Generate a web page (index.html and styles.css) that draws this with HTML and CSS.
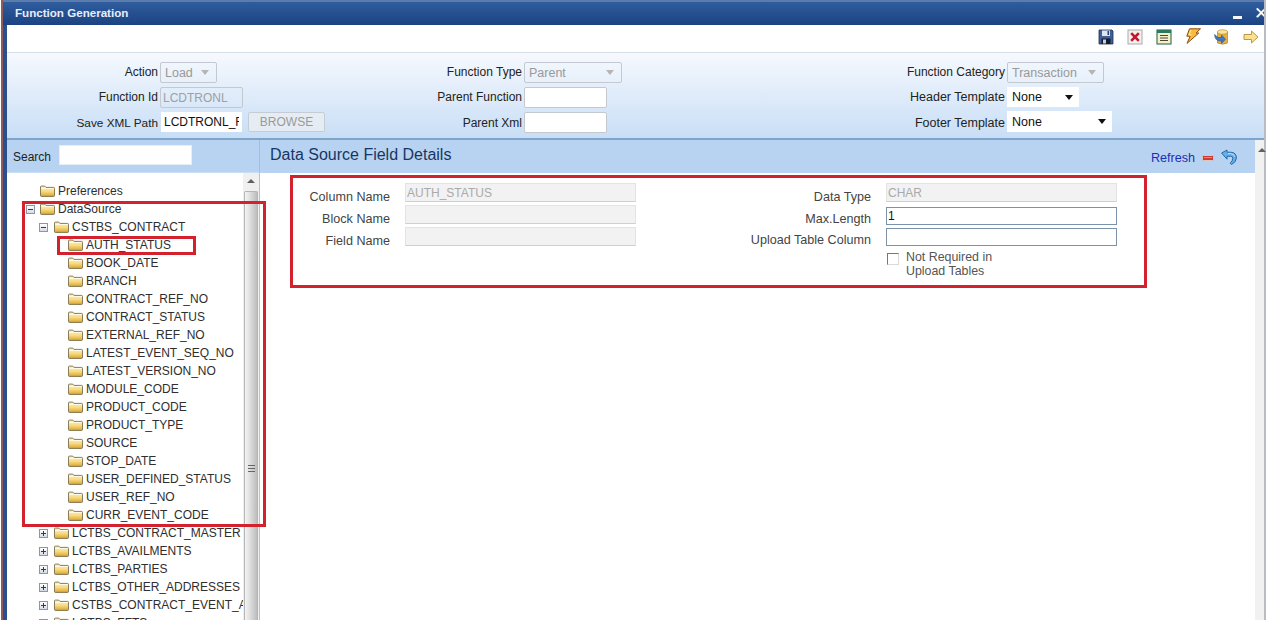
FILE: index.html
```html
<!DOCTYPE html>
<html lang="en">
<head>
<meta charset="utf-8">
<title>Function Generation</title>
<link rel="stylesheet" href="styles.css">
</head>
<body>
<svg class="defs" width="0" height="0">
  <defs>
    <linearGradient id="fg" x1="0" y1="0" x2="0" y2="1"><stop offset="0" stop-color="#fff4c4"/><stop offset="0.5" stop-color="#f8dc84"/><stop offset="1" stop-color="#dca52e"/></linearGradient>
    <symbol id="folder" viewBox="0 0 15 12">
      <path d="M.5 10.500V2q0-.9.9-.9h3.400l1.200 1.300h7.600q.9 0 .9.9v7.200q0 .9-.9.9H1.400q-.9 0-.9-.9z" fill="url(#fg)" stroke="#6a6040" stroke-width=".8"/>
      <path d="M1.200 3.500h12.600" stroke="#fffbe4" stroke-width=".9"/>
    </symbol>
  </defs>
</svg>
<div class="frame">
<div class="window">
  <header class="titlebar">
    <h1 class="title">Function Generation</h1>
    <div class="winbtns"><span class="winmin"></span><span class="winclose">✕</span></div>
  </header>
  <div class="toolbar">
    <svg class="tool" viewBox="0 0 16 16"><path d="M1 1h13l1 1v13H1z" fill="#3f5f97" stroke="#1c2f57" stroke-width=".8"/><rect x="4" y="1.500" width="8" height="5.500" fill="#dfe6ef"/><rect x="9.500" y="2" width="1.600" height="4" fill="#27406f"/><rect x="3.500" y="9.500" width="9" height="5.500" fill="#151c2b"/><rect x="5" y="10.500" width="3" height="4" fill="#c9d1dc"/></svg>
    <svg class="tool" viewBox="0 0 16 16"><rect x="1" y="1" width="14" height="14" fill="#f3f0ee" stroke="#a9a9b4"/><path d="M4.200 4.200l7.600 7.600M11.800 4.200l-7.600 7.600" stroke="#c2182b" stroke-width="2.600"/></svg>
    <svg class="tool" viewBox="0 0 16 16"><rect x="1" y="1" width="14" height="14" fill="#f6f0c8" stroke="#2c6a55" stroke-width="1.100"/><rect x="1" y="1" width="14" height="3" fill="#2c7a62"/><path d="M4 6.500h8M4 9h8M4 11.500h8" stroke="#4a4a36" stroke-width="1.200"/></svg>
    <svg class="tool tool-bolt" viewBox="0 0 16 16"><path d="M4.500 .8h11L11 5h2.800L2 15.400l3.200-7.200H1.800z" fill="#f7bd3a" stroke="#8d4a12" stroke-width="1"/><path d="M6 2l-2 5h2.500" fill="none" stroke="#fdeaa8" stroke-width="1"/></svg>
    <svg class="tool" viewBox="0 0 16 16"><path d="M3.500 3v11q5 2.400 10 0V3z" fill="#e7b03c" stroke="#a87a1e" stroke-width=".6"/><ellipse cx="8.500" cy="3" rx="5" ry="2.200" fill="#f8e6a0" stroke="#a87a1e" stroke-width=".6"/><path d="M.6 5.500l3.400 3h3.500V6l4 4.200-4 4.200v-2.600H4.500Q1 11 .6 5.500z" fill="#3f77c6" stroke="#24508f" stroke-width=".6"/></svg>
    <svg class="tool" viewBox="0 0 16 16"><path d="M1 5.500h7.500V2l6.500 6-6.500 6v-3.500H1z" fill="#fbe08d" stroke="#bd9848" stroke-width="1"/></svg>
  </div>
  <form class="head">
    <div class="hcol hcol-a">
      <label class="hl">Action</label>
      <span class="sel sel-off sel-action"><select disabled><option>Load</option></select></span>
      <label class="hl">Function Id</label>
      <input class="hin hin-off hin-id" disabled value="LCDTRONL">
      <label class="hl hl-last hl-path">Save XML Path</label>
      <span class="pathrow"><input class="hin hin-path" value="LCDTRONL_RAD.xml"><button class="browse" type="button" disabled>BROWSE</button></span>
    </div>
    <div class="hcol hcol-b">
      <label class="hl">Function Type</label>
      <span class="sel sel-off sel-type"><select disabled><option>Parent</option></select></span>
      <label class="hl">Parent Function</label>
      <input class="hin hin-parent">
      <label class="hl hl-last">Parent Xml</label>
      <input class="hin hin-parent">
    </div>
    <div class="hcol hcol-c">
      <label class="hl">Function Category</label>
      <span class="sel sel-off sel-cat"><select disabled><option>Transaction</option></select></span>
      <label class="hl hl-wide">Header Template</label>
      <span class="sel sel-on sel-hdr"><select><option>None</option></select></span>
      <label class="hl hl-wide hl-last">Footer Template</label>
      <span class="sel sel-on sel-ftr"><select><option>None</option></select></span>
    </div>
  </form>
  <div class="main">
    <aside class="side">
      <div class="searchbar"><label class="searchlabel">Search</label><input class="searchin"></div>
      <div class="treewrap">
        <div class="tree">
          <div class="row l0"><span class="tg none"></span><svg class="fd"><use href="#folder"/></svg>Preferences</div>
          <div class="row l0"><span class="tg minus"></span><svg class="fd"><use href="#folder"/></svg>DataSource</div>
          <div class="row l1"><span class="tg minus"></span><svg class="fd"><use href="#folder"/></svg>CSTBS_CONTRACT</div>
          <div class="row l2"><svg class="fd"><use href="#folder"/></svg>AUTH_STATUS</div>
          <div class="row l2"><svg class="fd"><use href="#folder"/></svg>BOOK_DATE</div>
          <div class="row l2"><svg class="fd"><use href="#folder"/></svg>BRANCH</div>
          <div class="row l2"><svg class="fd"><use href="#folder"/></svg>CONTRACT_REF_NO</div>
          <div class="row l2"><svg class="fd"><use href="#folder"/></svg>CONTRACT_STATUS</div>
          <div class="row l2"><svg class="fd"><use href="#folder"/></svg>EXTERNAL_REF_NO</div>
          <div class="row l2"><svg class="fd"><use href="#folder"/></svg>LATEST_EVENT_SEQ_NO</div>
          <div class="row l2"><svg class="fd"><use href="#folder"/></svg>LATEST_VERSION_NO</div>
          <div class="row l2"><svg class="fd"><use href="#folder"/></svg>MODULE_CODE</div>
          <div class="row l2"><svg class="fd"><use href="#folder"/></svg>PRODUCT_CODE</div>
          <div class="row l2"><svg class="fd"><use href="#folder"/></svg>PRODUCT_TYPE</div>
          <div class="row l2"><svg class="fd"><use href="#folder"/></svg>SOURCE</div>
          <div class="row l2"><svg class="fd"><use href="#folder"/></svg>STOP_DATE</div>
          <div class="row l2"><svg class="fd"><use href="#folder"/></svg>USER_DEFINED_STATUS</div>
          <div class="row l2"><svg class="fd"><use href="#folder"/></svg>USER_REF_NO</div>
          <div class="row l2"><svg class="fd"><use href="#folder"/></svg>CURR_EVENT_CODE</div>
          <div class="row l1"><span class="tg plus"></span><svg class="fd"><use href="#folder"/></svg>LCTBS_CONTRACT_MASTER</div>
          <div class="row l1"><span class="tg plus"></span><svg class="fd"><use href="#folder"/></svg>LCTBS_AVAILMENTS</div>
          <div class="row l1"><span class="tg plus"></span><svg class="fd"><use href="#folder"/></svg>LCTBS_PARTIES</div>
          <div class="row l1"><span class="tg plus"></span><svg class="fd"><use href="#folder"/></svg>LCTBS_OTHER_ADDRESSES</div>
          <div class="row l1"><span class="tg plus"></span><svg class="fd"><use href="#folder"/></svg>CSTBS_CONTRACT_EVENT_ADVICE</div>
          <div class="row l1"><span class="tg plus"></span><svg class="fd"><use href="#folder"/></svg>LCTBS_FFTS</div>
        </div>
        <div class="vbar">
          <div class="vbtn"><span class="uparrow"></span></div>
          <div class="vthumb"><span class="grip"></span></div>
        </div>
      </div>
    </aside>
    <section class="content">
      <div class="chead">
        <h2 class="ctitle">Data Source Field Details</h2>
        <div class="cactions">
          <a class="refresh">Refresh</a>
          <svg class="minus-ic" viewBox="0 0 12 6"><rect x=".5" y=".5" width="11" height="5" rx="1" fill="#d03a32" stroke="#d9c8c4"/><rect x="2" y="2" width="8" height="1" fill="#f08a76"/></svg>
          <svg class="undo-ic" viewBox="0 0 16 16"><path d="M.6 4l5.400-3v2.200h3.600Q15.400 3.400 15.400 9q0 4-4.900 6.500l-1.300-1.200q2.600-2.400 2.600-5 0-2-2.200-2H6v2.900z" fill="#66b0e8" stroke="#1f5f9e" stroke-width=".9"/><path d="M7 4.600h2.800q3.300.4 3.900 3" fill="none" stroke="#c4e2f8" stroke-width="1"/></svg>
        </div>
      </div>
      <div class="fields">
        <div class="fgrid fgrid-l">
          <label class="fl">Column Name</label><input class="fin fin-off" disabled value="AUTH_STATUS">
          <label class="fl">Block Name</label><input class="fin fin-off" disabled>
          <label class="fl">Field Name</label><input class="fin fin-off" disabled>
        </div>
        <div class="fgrid fgrid-r">
          <label class="fl">Data Type</label><input class="fin fin-off" disabled value="CHAR">
          <label class="fl fl-t">Max.Length</label><input class="fin fin-on" value="1">
          <label class="fl fl-t">Upload Table Column</label><input class="fin fin-on">
          <div class="checkrow"><input class="chk" type="checkbox"><span class="chktext">Not Required in<br>Upload Tables</span></div>
        </div>
      </div>
    </section>
    <div class="rbar"><span class="uparrow"></span></div>
  </div>
</div>
</div>
<div class="mark mark-tree"></div>
<div class="mark mark-node"></div>
<div class="mark mark-form"></div>
</body>
</html>
```
FILE: styles.css
```css
* { box-sizing: border-box; }
html, body { margin: 0; height: 620px; overflow: hidden; }
body {
  padding-left: 1px;
  background: #fff;
  font: 12px/14px "Liberation Sans", Arial, sans-serif;
  color: #333;
  position: relative;
}
.defs { position: absolute; }
.frame {
  width: 1265px;
  height: 620px;
  border-left: 2px solid #8d5c5a;
  border-right: 2px solid #b9bcc0;
}
.window {
  height: 620px;
  border-left: 4px solid #2b4f8d;
  display: flex;
  flex-direction: column;
  background: #fff;
}

/* title bar */
.titlebar {
  height: 25px;
  flex: none;
  margin-left: -4px;
  padding: 2px 0 0 12px;
  border-top: 2px solid #5d7cae;
  background: linear-gradient(#2f5d9e, #1b4382);
  display: flex;
  align-items: center;
  justify-content: space-between;
}
.title {
  margin: 0 0 4px;
  font: bold 11.6px/14px "Liberation Sans", Arial, sans-serif;
  color: #e8eef8;
}
.winbtns { display: flex; align-items: center; gap: 12px; width: 31px; overflow: hidden; height: 21px; }
.winmin { width: 9px; height: 3px; background: #f4f7fb; flex: none; margin-top: 5px; }
.winclose { color: #fff; font: bold 17px/17px "DejaVu Sans", sans-serif; flex: none; margin-top: -3px; }

/* toolbar */
.toolbar {
  height: 28px;
  flex: none;
  border-bottom: 1px solid #d6deea;
  padding: 4px 5px 0 0;
  display: flex;
  justify-content: flex-end;
  gap: 13px;
}
.tool { width: 16px; height: 16px; flex: none; }
.tool-bolt { margin-top: -1px; }

/* header form */
.head {
  height: 87px;
  flex: none;
  padding-top: 9px;
  display: grid;
  grid-template-columns: 340px 480px 1fr;
  background: linear-gradient(#f6f9fe, #c8def6);
  border-bottom: 2px solid #7fa4c9;
}
.hcol { display: grid; grid-auto-rows: 25px; column-gap: 2px; align-items: start; }
.hcol-a { grid-template-columns: 151px auto; }
.hcol-b { grid-template-columns: 175px auto; }
.hcol-c { grid-template-columns: 178px auto; }
.hl { text-align: right; color: #222; line-height: 21px; white-space: nowrap; }
.hl-last { line-height: 22px; }
.hl-path { font-size: 11.8px; }
.hl-wide { font-size: 12.5px; }
.hin {
  display: block;
  height: 21px;
  padding: 0 2px;
  border: 1px solid #c4c9cf;
  border-radius: 2px;
  background: #fff;
  font: 12px "Liberation Sans", Arial, sans-serif;
  color: #111;
  outline: 0;
}
.hin-off { background: transparent; color: #a0a0a0; }
.hin-id { width: 83px; }
.hin-parent { width: 83px; }
.pathrow { display: flex; gap: 6px; }
.hin-path { width: 81px; height: 20px; margin-left: 1px; border-color: #fff; border-radius: 0; padding: 0 2px; }
.browse {
  width: 77px;
  height: 20px;
  padding: 0;
  border: 1px solid #c6ccd3;
  border-radius: 2px;
  background: #e6ecf3;
  color: #9a9a9a;
  font: 12px "Liberation Sans", Arial, sans-serif;
}
.sel { display: block; position: relative; height: 21px; }
.sel select {
  appearance: none;
  width: 100%;
  height: 100%;
  padding: 0 4px;
  border: 1px solid #c4c9cf;
  border-radius: 2px;
  background: transparent;
  font: 12.5px "Liberation Sans", Arial, sans-serif;
  outline: 0;
}
.sel::after {
  content: "";
  position: absolute;
  right: 8px;
  top: 8px;
  border: 4px solid transparent;
  border-top: 5px solid #b5b5b5;
  border-bottom: 0;
}
.sel-off select { background: transparent; color: #999; opacity: 1; }
.sel-on select { background: #fff; color: #111; border-color: #fff; border-radius: 0; }
.sel-on::after { border-top-color: #111; right: 6px; }
.sel-action { width: 57px; }
.sel-type { width: 98px; }
.sel-cat { width: 97px; }
.sel-hdr { width: 72px; height: 20px; }
.sel-ftr { width: 105px; margin-top: -1px; }

/* main area */
.main { flex: 1; min-height: 0; display: flex; }

.side { width: 253px; flex: none; display: flex; flex-direction: column; }
.searchbar {
  height: 33px;
  flex: none;
  padding: 5px 0 0 6px;
  display: flex;
  gap: 8px;
  background: #b8d3f1;
  border-right: 1px solid #9dbfe0;
  border-bottom: 1px solid #c9ddf3;
}
.searchlabel { line-height: 24px; color: #222; }
.searchin { width: 133px; height: 20px; border: 1px solid #e6eef8; background: #fff; outline: 0; }
.treewrap { flex: 1; min-height: 0; display: flex; }
.tree { width: 236px; flex: none; padding-top: 9px; overflow: hidden; }
.row { height: 18px; display: flex; align-items: center; white-space: nowrap; color: #2e2e2e; }
.l0 { padding-left: 19px; }
.l1 { padding-left: 32px; }
.l2 { padding-left: 61px; }
.tg {
  width: 9px;
  height: 9px;
  margin-right: 5px;
  flex: none;
  border: 1px solid #8b97a8;
  background: linear-gradient(#fff, #d5dce6);
  position: relative;
}
.l1 .tg { margin-right: 6px; }
.tg.none { visibility: hidden; }
.tg.minus::before, .tg.plus::before {
  content: "";
  position: absolute;
  left: 1px;
  top: 3px;
  width: 5px;
  height: 1px;
  background: #1e3f70;
}
.tg.plus::after {
  content: "";
  position: absolute;
  left: 3px;
  top: 1px;
  width: 1px;
  height: 5px;
  background: #1e3f70;
}
.fd { width: 15px; height: 12px; margin-right: 3px; flex: none; }

.vbar {
  width: 17px;
  flex: none;
  display: flex;
  flex-direction: column;
  background: #f0f0f0;
  border-right: 1px solid #a9c6e6;
}
.vbtn { height: 18px; flex: none; display: flex; justify-content: center; padding-top: 6px; }
.uparrow {
  width: 0;
  height: 0;
  border: 4px solid transparent;
  border-top: 0;
  border-bottom: 4px solid #606060;
}
.vthumb {
  flex: 1;
  margin: 0 1px;
  border: 1px solid #b5b5b5;
  border-bottom: 0;
  border-radius: 2px 2px 0 0;
  background: linear-gradient(90deg, #f4f4f4, #dcdcdc 45%, #bcbcbc);
  position: relative;
}
.grip {
  position: absolute;
  left: 3px;
  top: 273px;
  width: 7px;
  height: 7px;
  border-top: 1px solid #666;
  border-bottom: 1px solid #666;
  background: linear-gradient(#666, #666) center / 100% 1px no-repeat;
}

.content { flex: 1; min-width: 0; display: flex; flex-direction: column; }
.chead {
  height: 33px;
  flex: none;
  padding: 0 18px 0 10px;
  display: flex;
  align-items: center;
  justify-content: space-between;
  background: #b8d3f1;
}
.ctitle { margin: 0 0 3px; font: 16px/20px "Liberation Sans", Arial, sans-serif; color: #163763; }
.cactions { display: flex; align-items: center; gap: 7px; }
.refresh { color: #1b2fb4; font-size: 12.6px; margin-top: 2px; }
.minus-ic { width: 12px; height: 6px; margin-top: 2px; }
.undo-ic { width: 16px; height: 16px; }

.fields { padding: 10px 0 0 30px; display: flex; }
.fgrid { display: grid; column-gap: 15px; align-items: start; }
.fgrid-l { grid-template-columns: 100px 231px; grid-auto-rows: 22px; align-content: start; }
.fgrid-r { grid-template-columns: 121px 231px; grid-template-rows: 24px 21px 21px auto; margin-left: 114px; }
.fl { text-align: right; font-size: 12.6px; color: #444; margin-top: 7px; white-space: nowrap; }
.fl-t { margin-top: 5px; }
.fin {
  display: block;
  width: 231px;
  height: 18px;
  padding: 0 1px;
  font: 12px/14px "Liberation Sans", Arial, sans-serif;
  outline: 0;
}
.fin-off { height: 19px; border: 1px solid #e3e3e3; border-bottom-color: #d0d0d0; background: #f2f2f2; color: #aaa; }
.fin-on { border: 1px solid #7b93a8; background: #fff; color: #111; }
.checkrow { grid-column: 2; display: flex; margin-top: 1px; gap: 7px; }
.chk {
  appearance: none;
  width: 12px;
  height: 12px;
  margin: 3px 0 0 1px;
  flex: none;
  border: 1px solid #dadada;
  border-top-color: #777;
  border-left-color: #777;
  background: #fff;
}
.chktext { color: #555; font-size: 12.4px; }

.rbar {
  width: 9px;
  flex: none;
  background: #f1f1f1;
  display: flex;
  justify-content: center;
  align-items: flex-start;
  padding: 8px 0 0 5px;
}

/* red annotation boxes drawn over the screen */
.mark { position: absolute; border: 3px solid #d3222e; }
.mark-tree { left: 22px; top: 201px; width: 244px; height: 326px; }
.mark-node { left: 57px; top: 236px; width: 139px; height: 19px; }
.mark-form { left: 290px; top: 175px; width: 857px; height: 113px; }
```
